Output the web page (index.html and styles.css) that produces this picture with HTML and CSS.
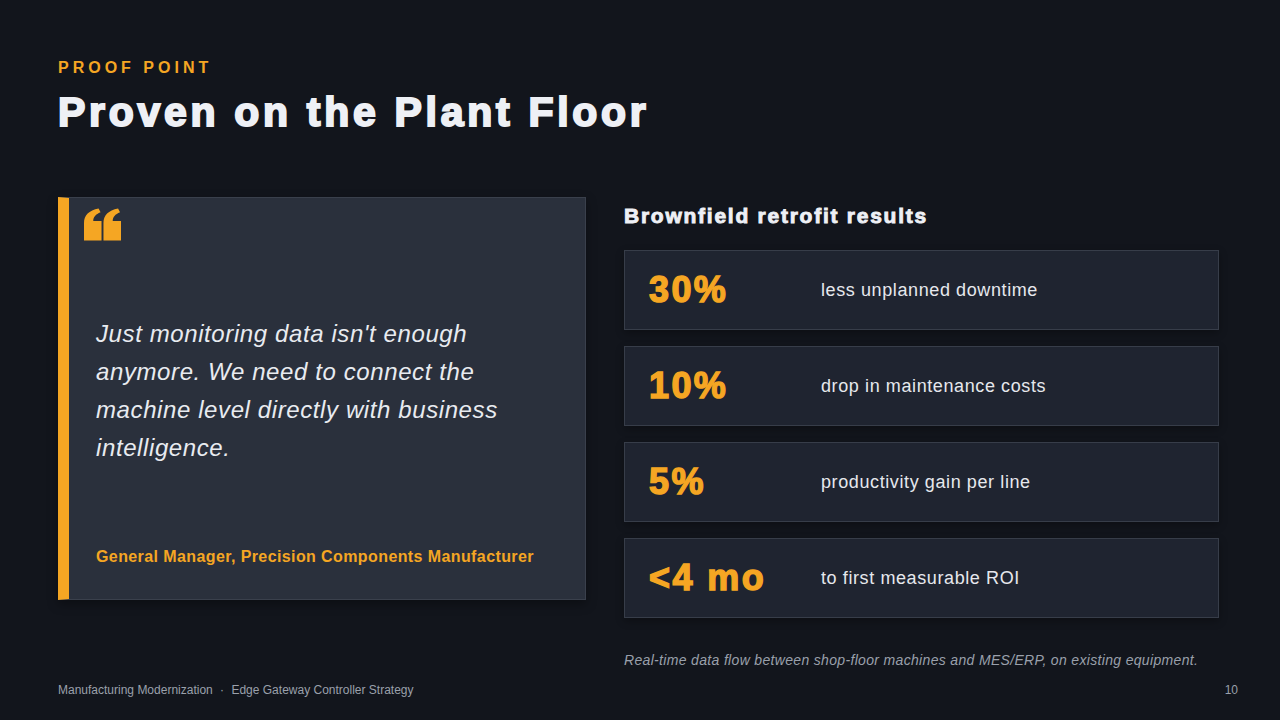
FILE: index.html
```html
<!DOCTYPE html>
<html lang="en">
<head>
<meta charset="utf-8">
<title>Proven on the Plant Floor</title>
<link rel="stylesheet" href="styles.css">
</head>
<body>
<div class="slide">
  <header class="head">
    <div class="kicker">PROOF POINT</div>
    <h1 class="title">Proven on the Plant Floor</h1>
  </header>
  <main class="body">
    <section class="quote-card">
      <svg class="quote-mark" width="37" height="33" viewBox="0 0 38 33" aria-hidden="true">
        <path d="M0 33 V15 C0 7 5 2 15 0 L17 4 C12 6 9.5 9 9.5 13 H18 V33 Z" fill="#f5a623"/>
        <path d="M20 33 V15 C20 7 25 2 35 0 L37 4 C32 6 29.5 9 29.5 13 H38 V33 Z" fill="#f5a623"/>
      </svg>
      <blockquote class="quote-text">Just monitoring data isn't enough anymore. We need to connect the machine level directly with business intelligence.</blockquote>
      <div class="attribution">General Manager, Precision Components Manufacturer</div>
    </section>
    <section class="results">
      <h2 class="results-title">Brownfield retrofit results</h2>
      <div class="stats">
        <div class="stat"><div class="stat-value">30%</div><div class="stat-label">less unplanned downtime</div></div>
        <div class="stat"><div class="stat-value">10%</div><div class="stat-label">drop in maintenance costs</div></div>
        <div class="stat"><div class="stat-value">5%</div><div class="stat-label">productivity gain per line</div></div>
        <div class="stat"><div class="stat-value">&lt;4 mo</div><div class="stat-label">to first measurable ROI</div></div>
      </div>
      <p class="caption">Real-time data flow between shop-floor machines and MES/ERP, on existing equipment.</p>
    </section>
  </main>
  <footer class="foot">
    <span class="foot-left">Manufacturing Modernization <span class="dot">·</span> Edge Gateway Controller Strategy</span>
    <span class="page">10</span>
  </footer>
</div>
</body>
</html>
```
FILE: styles.css
```css
* { box-sizing: border-box; }
html, body { margin: 0; padding: 0; background: #12151c; }
.slide {
  width: 1280px;
  height: 720px;
  background: #12151c;
  font-family: "Liberation Sans", Arial, sans-serif;
  color: #eef0f4;
  padding: 59px 0 0 58px;
  display: flex;
  flex-direction: column;
  overflow: hidden;
}
.head { padding-right: 61px; }
.kicker {
  font-size: 16px;
  line-height: 18px;
  font-weight: 700;
  letter-spacing: 4px;
  color: #f5a623;
}
.title {
  margin: 11px 0 0;
  font-size: 41px;
  line-height: 48px;
  font-weight: 700;
  letter-spacing: 3.7px;
  -webkit-text-stroke: 2px #eef0f5;
  color: #eef0f5;
}
.body {
  margin-top: 61px;
  display: grid;
  grid-template-columns: 528px 595px;
  column-gap: 38px;
  align-items: start;
}
.quote-card {
  height: 403px;
  background: #2a303c;
  border: 1px solid #3a404c;
  border-left: 11px solid #f5a623;
  box-shadow: 0 4px 10px rgba(0,0,0,0.35);
  padding: 10px 30px 32px 15px;
  display: flex;
  flex-direction: column;
}
.quote-mark { display: block; }
.quote-text {
  margin: 74px 0 0 12px;
  max-width: 420px;
  font-style: italic;
  font-size: 24px;
  line-height: 38px;
  letter-spacing: 0.6px;
  color: #e8ebf0;
}
.attribution {
  margin: auto 0 0 12px;
  font-size: 16px;
  line-height: 20px;
  font-weight: 700;
  letter-spacing: 0.4px;
  color: #f5a623;
}
.results { display: flex; flex-direction: column; }
.results-title {
  margin: 7px 0 0;
  font-size: 21px;
  line-height: 24px;
  font-weight: 700;
  letter-spacing: 1.75px;
  -webkit-text-stroke: 0.9px #eef0f5;
  color: #eef0f5;
}
.stats {
  margin-top: 22px;
  display: flex;
  flex-direction: column;
  gap: 16px;
}
.stat {
  height: 80px;
  background: #1f2430;
  border: 1px solid #373d49;
  box-shadow: 0 3px 8px rgba(0,0,0,0.3);
  display: flex;
  align-items: center;
  padding-left: 24px;
}
.stat-value {
  width: 172px;
  font-size: 36px;
  font-weight: 700;
  letter-spacing: 2.4px;
  -webkit-text-stroke: 1.4px #f5a623;
  color: #f5a623;
}
.stat-label {
  font-size: 18px;
  letter-spacing: 0.6px;
  color: #e6e8ed;
}
.caption {
  margin: 33px 0 0;
  font-size: 14px;
  line-height: 18px;
  font-style: italic;
  letter-spacing: 0.33px;
  color: #9aa0ab;
}
.foot {
  margin-top: auto;
  padding: 0 42px 23px 0;
  display: flex;
  justify-content: space-between;
  font-size: 12px;
  line-height: 14px;
  color: #9aa0ab;
}
.dot { margin: 0 4px; }
```
